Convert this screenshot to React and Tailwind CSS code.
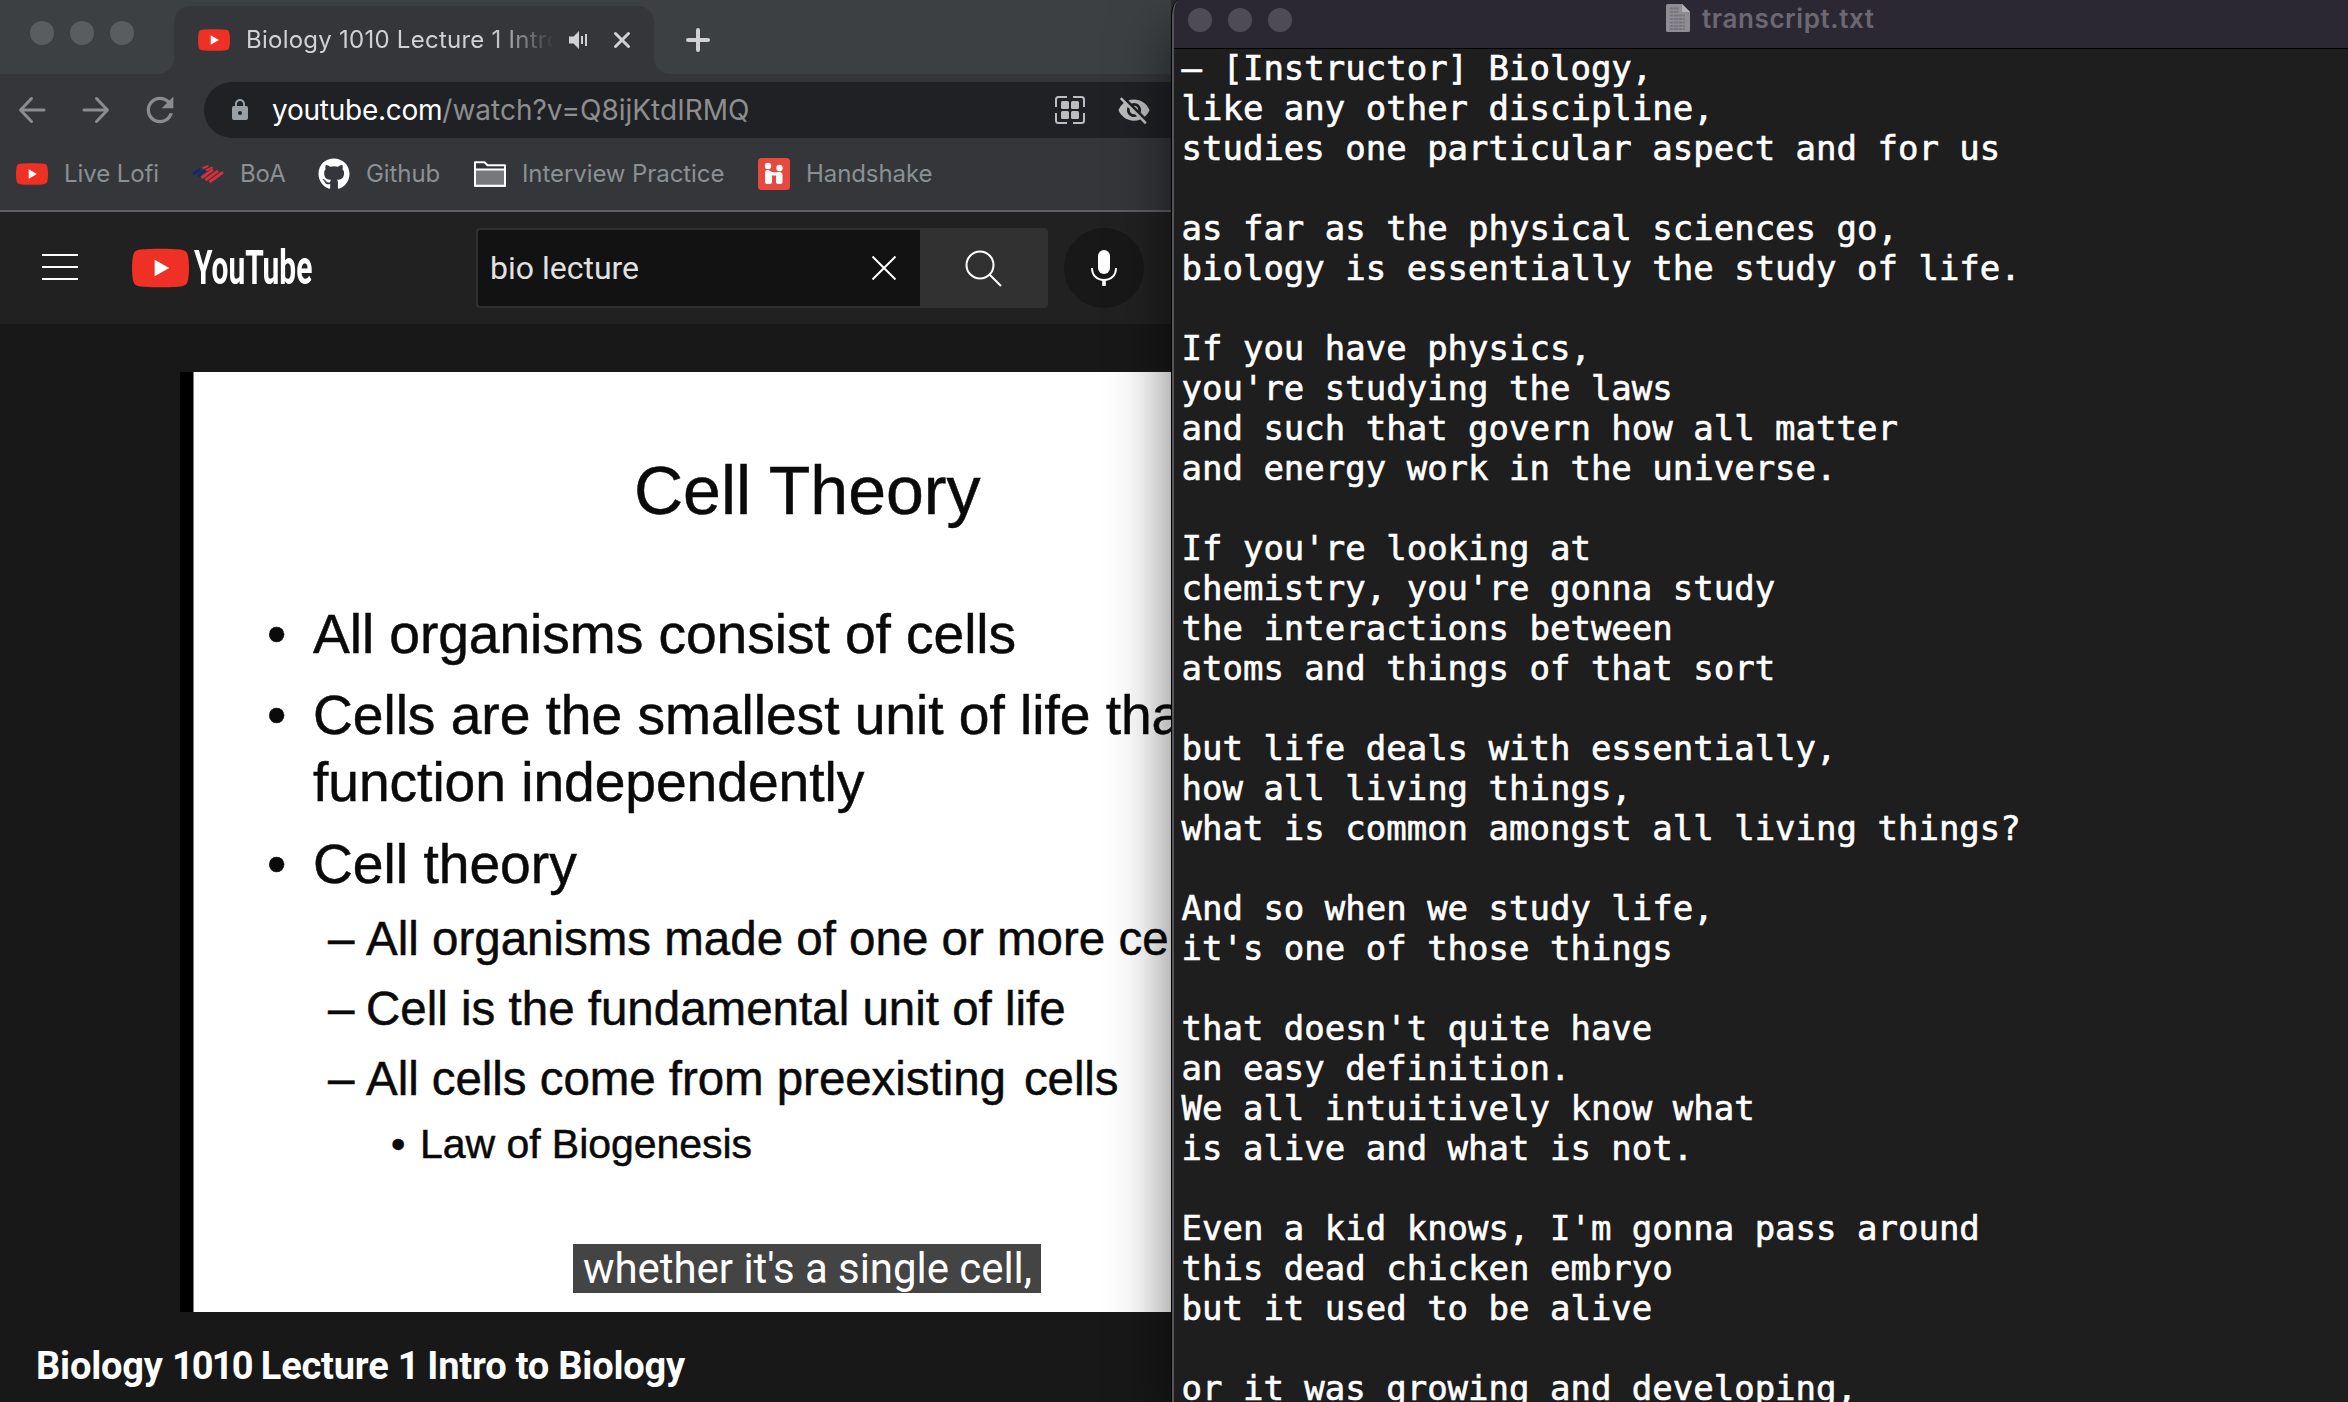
import React from "react";
import { FaGithub } from "react-icons/fa";
import { MdLock, MdVisibilityOff, MdRefresh } from "react-icons/md";

function YouTubeBadge({ className }) {
  return (
    <svg viewBox="0 0 32 22" className={className}>
      <path
        d="M4 .8C9 0 23 0 28 .8c2 .3 3 1.300 3.400 3.200.8 4 .8 10 0 14-.4 1.900-1.400 2.900-3.400 3.200-5 .8-19 .8-24 0-2-.3-3-1.300-3.400-3.200C-.2 14-.2 8 .6 4 1 2.100 2 1.100 4 .8Z"
        fill="#ee3124"
      />
      <path d="M12.700 6.300v9.400l8.200-4.700Z" fill="#fff" />
    </svg>
  );
}

function TrafficLights({ dot }) {
  return (
    <div className="flex gap-4">
      {[0, 1, 2].map((i) => (
        <span key={i} className={`size-6 rounded-full ${dot}`} />
      ))}
    </div>
  );
}

function BoaIcon() {
  return (
    <svg viewBox="0 0 32 18" className="h-[18px] w-8 shrink-0" fill="none">
      <path d="M1 9 8.500 4.500M6 11.300 12.500 5.500" stroke="#14296b" strokeWidth="2.800" />
      <path d="M10.500 3.300 16.500 .9M14 5.300 20.500 2.300" stroke="#d5303e" strokeWidth="2" />
      <path d="M9.500 12.700 21 4.600M13.500 15 26 5.800M17.500 17 31 7.300" stroke="#d5303e" strokeWidth="2.900" />
    </svg>
  );
}

function FolderIcon() {
  return (
    <svg viewBox="0 0 32 26" className="h-[26px] w-8 shrink-0">
      <path d="M1 24.800V1.200h9.500l3 3H31v20.600Z" fill="#35363a" stroke="#fff" strokeWidth="2" strokeLinejoin="round" />
      <path d="M1 8.500h30v16.300H1Z" fill="#77787b" stroke="#fff" strokeWidth="2" strokeLinejoin="round" />
    </svg>
  );
}

function HandshakeIcon() {
  return (
    <svg viewBox="0 0 32 32" className="size-8 shrink-0">
      <rect width="32" height="32" rx="3.500" fill="#e64a3f" />
      <circle cx="10" cy="8" r="3.200" fill="#fff" />
      <circle cx="21.500" cy="10" r="3.200" fill="#fff" />
      <path
        d="M7 14.500c0-2 1.500-2.800 3-2.500 1.500.3 3 2 5.500 2.300 2 .3 3-.2 5.500-.2 2.500 0 3.500 1.200 3.500 3V24c0 1.300-.8 2-2 2h-2.500c-1.200 0-2-.7-2-2v-6.500h-4V24c0 1.300-.8 2-2 2H9c-1.200 0-2-.7-2-2Z"
        fill="#fff"
      />
    </svg>
  );
}

function TabStrip() {
  return (
    <div className="flex h-[74px] shrink-0">
      <div className="w-[174px] shrink-0 rounded-br-2xl bg-[#3c4043] pt-[21px] pl-[30px]">
        <TrafficLights dot="bg-[#5a5d60]" />
      </div>
      <div className="w-[480px] shrink-0 bg-[#3c4043] pt-1.5">
        <div className="flex h-[68px] items-start rounded-t-2xl bg-[#35363a] pt-[13px] pl-6 text-[#d0d1d3]">
          <YouTubeBadge className="mt-2.5 h-[22px] w-8 shrink-0" />
          <div className="ml-4 h-10 w-[308px] shrink-0 overflow-hidden mask-r-from-80% mask-r-to-100% text-2xl leading-[41px] tracking-[0.25px] whitespace-nowrap">
            Biology 1010 Lecture 1 Intro to Biology
          </div>
          <svg viewBox="0 0 18 18" className="mt-3 ml-[15px] size-[18px] shrink-0" fill="currentColor">
            <path d="M0 5.500h4.500L10 0v18l-5.500-5.500H0Z M12 5h2v8h-2Z M16 3h2v12h-2Z" />
          </svg>
          <svg viewBox="0 0 18 18" className="mt-3 ml-[26px] size-[18px] shrink-0" stroke="currentColor" strokeWidth="3" strokeLinecap="round">
            <path d="M2.500 2.500l13 13M15.500 2.500l-13 13" />
          </svg>
        </div>
      </div>
      <div className="flex-1 rounded-bl-2xl bg-[#3c4043] pt-7 pl-8">
        <svg viewBox="0 0 24 24" className="size-6" stroke="#d0d1d3" strokeWidth="4" strokeLinecap="round">
          <path d="M12 2v20M2 12h20" />
        </svg>
      </div>
    </div>
  );
}

function Toolbar() {
  return (
    <div className="flex h-[72px] shrink-0 items-center pl-[18px] text-[#8b8c8e]">
      <svg viewBox="0 0 28 28" className="size-7 shrink-0" fill="none" stroke="currentColor" strokeWidth="3" strokeLinecap="round" strokeLinejoin="round">
        <path d="M26 14H3M13.500 2.500 2.500 14l11 11.500" />
      </svg>
      <svg viewBox="0 0 28 28" className="ml-9 size-7 shrink-0" fill="none" stroke="currentColor" strokeWidth="3" strokeLinecap="round" strokeLinejoin="round">
        <path d="M2 14h23M14.500 2.500l11 11.500-11 11.500" />
      </svg>
      <MdRefresh className="ml-[30px] size-10 shrink-0" />
      <div className="ml-6 flex h-14 flex-1 items-center rounded-l-full bg-[#202124] pl-6">
        <MdLock className="size-6 shrink-0 text-[#9aa0a6]" />
        <div className="ml-5 flex-1 text-[28px] leading-10 whitespace-nowrap text-[#8e8e8f]">
          <span className="tracking-[-0.25px] text-white">youtube.com</span>
          <span className="tracking-[0px]">/watch?v=Q8ijKtdIRMQ</span>
        </div>
        <svg viewBox="0 0 30 30" className="size-[30px] shrink-0 text-[#bdbdbe]">
          <g fill="none" stroke="currentColor" strokeWidth="2">
            <path d="M1 12V4.500Q1 2 3.500 2H12M18 2h8.500Q29 2 29 4.500V12M29 18v7.500q0 2.500-2.500 2.500H18M12 28H3.500Q1 28 1 25.500V18" />
          </g>
          <g fill="currentColor">
            <rect x="6" y="6" width="8" height="8" rx="1.500" />
            <rect x="16" y="6" width="8" height="8" rx="1.500" />
            <rect x="6" y="16" width="8" height="8" rx="1.500" />
            <rect x="16" y="16" width="8" height="8" rx="1.500" />
          </g>
        </svg>
        <MdVisibilityOff className="mr-[20px] ml-8 size-[34px] shrink-0 text-[#bdbdbe]" />
      </div>
    </div>
  );
}

function Bookmark({ icon, label, className }) {
  return (
    <div className={`flex shrink-0 items-center ${className}`}>
      {icon}
      <span className="ml-4 text-2xl tracking-[-0.08px] whitespace-nowrap text-[#8a9093]">{label}</span>
    </div>
  );
}

function BookmarksBar() {
  return (
    <div className="flex h-[66px] shrink-0 items-center border-b-2 border-[#5f6065] pb-[8px] pl-4">
      <Bookmark className="w-[176px]" label="Live Lofi" icon={<YouTubeBadge className="h-[22px] w-8 shrink-0" />} />
      <Bookmark className="w-[126px]" label="BoA" icon={<BoaIcon />} />
      <Bookmark className="w-[156px]" label="Github" icon={<FaGithub className="size-8 shrink-0 text-white" />} />
      <Bookmark className="w-[284px]" label="Interview Practice" icon={<FolderIcon />} />
      <Bookmark className="w-[190px]" label="Handshake" icon={<HandshakeIcon />} />
    </div>
  );
}

function YouTubeHeader() {
  return (
    <header className="flex h-28 shrink-0 items-center bg-[#212121] pl-[42px] font-[Roboto,sans-serif]">
      <div className="-mt-0.5 flex w-9 shrink-0 flex-col gap-2.5">
        <span className="h-0.5 bg-white" />
        <span className="h-0.5 bg-white" />
        <span className="h-0.5 bg-white" />
      </div>
      <YouTubeBadge className="ml-[54px] h-10 w-[57px] shrink-0" />
      <div className="w-[170px] shrink-0">
        <span className="ml-[5px] inline-block origin-left scale-x-[0.61] text-[49px] leading-[56px] font-bold text-white">YouTube</span>
      </div>
      <div className="ml-[117px] flex h-20 w-[444px] shrink-0 items-center rounded-l-sm border-2 border-r-0 border-[#303030] bg-[#121212] pl-3">
        <span className="flex-1 text-[32px] leading-10 text-[#e1e1e1]">bio lecture</span>
        <svg viewBox="0 0 24 24" className="mr-6 size-6" stroke="#fff" strokeWidth="2">
          <path d="M.5.5l23 23M23.500.5l-23 23" />
        </svg>
      </div>
      <div className="flex h-20 w-32 shrink-0 items-center rounded-r-sm bg-[#313131] pl-[45px]">
        <svg viewBox="0 0 37 37" className="size-[37px]" fill="none" stroke="#fff" strokeWidth="2">
          <circle cx="15" cy="15" r="13.500" />
          <path d="M24.500 24.500 36 36" />
        </svg>
      </div>
      <div className="ml-4 flex size-20 shrink-0 items-center justify-center rounded-full bg-[#181818]">
        <svg viewBox="0 0 26 36" className="h-9 w-[26px]">
          <rect x="7" y="0" width="12" height="24" rx="6" fill="#fff" />
          <path d="M1 18c0 7.500 5 12 12 12s12-4.500 12-12" fill="none" stroke="#fff" strokeWidth="2" />
          <path d="M11.200 30h3.600v6h-3.600Z" fill="#fff" />
        </svg>
      </div>
    </header>
  );
}

function Slide() {
  return (
    <div className="relative ml-[180px] h-[940px] shrink-0 overflow-hidden border-l-[13px] border-black bg-white font-['Liberation_Sans',Arial,sans-serif] whitespace-nowrap text-[#0a0a0a] [-webkit-text-stroke:0.5px_#0a0a0a]">
      <div className="h-full border-l border-[#808080]">
        <h1 className="pt-[78px] pl-[440px] text-[68px] leading-[80px] font-normal">Cell Theory</h1>
        <ul className="mt-[71px] pl-[73px] text-[55.2px] leading-[67px]">
          <li className="flex">
            <span className="w-[46px] shrink-0">•</span>
            <span className="tracking-[-0.08px]">All organisms consist of cells</span>
          </li>
          <li className="mt-[14px] flex">
            <span className="w-[46px] shrink-0">•</span>
            <span className="tracking-[-0.05px]">
              Cells are the smallest unit of life that
              <br />
              function independently
            </span>
          </li>
          <li className="mt-[15px] flex">
            <span className="w-[46px] shrink-0">•</span>Cell theory
          </li>
        </ul>
        <ul className="mt-[6px] pl-[134px] text-[47.5px] leading-[70px]">
          <li className="flex">
            <span className="w-[38px] shrink-0">–</span>All organisms made of one or more cells
          </li>
          <li className="flex">
            <span className="w-[38px] shrink-0">–</span>Cell is the fundamental unit of life
          </li>
          <li className="flex">
            <span className="w-[38px] shrink-0">–</span>
            <span className="tracking-[-0.05px]">All cells come from preexisting</span>
            <span className="ml-[18px] tracking-[-0.1px]">cells</span>
          </li>
        </ul>
        <p className="flex pl-[197px] text-[41px] leading-[60px]">
          <span className="w-[29px] shrink-0">•</span>
          <span className="tracking-[-0.05px]">Law of Biogenesis</span>
        </p>
      </div>
      <div className="absolute bottom-[19px] left-[380px] h-[49px] w-[468px] bg-[#444] pl-px text-center font-[Roboto,sans-serif] text-[42px] leading-[49px] tracking-[-0.05px] text-white [-webkit-text-stroke:0px]">
        whether it's a single cell,
      </div>
    </div>
  );
}

function Browser() {
  return (
    <section className="flex h-full w-[1171px] shrink-0 flex-col overflow-hidden bg-[#35363a] font-[Inter,sans-serif]">
      <TabStrip />
      <Toolbar />
      <BookmarksBar />
      <YouTubeHeader />
      <main className="flex flex-1 flex-col bg-[#181818] pt-12">
        <Slide />
        <h2 className="mt-[30px] ml-[36px] font-[Roboto,sans-serif] text-[38px] leading-[48px] font-bold tracking-[-0.2px] whitespace-nowrap text-white">
          Biology <span className="tracking-[-1.900px]">1010</span> Lecture <span className="tracking-[-1.500px]">1</span> Intro to Biology
        </h2>
      </main>
    </section>
  );
}

const transcript = `– [Instructor] Biology,
like any other discipline,
studies one particular aspect and for us

as far as the physical sciences go,
biology is essentially the study of life.

If you have physics,
you're studying the laws
and such that govern how all matter
and energy work in the universe.

If you're looking at
chemistry, you're gonna study
the interactions between
atoms and things of that sort

but life deals with essentially,
how all living things,
what is common amongst all living things?

And so when we study life,
it's one of those things

that doesn't quite have
an easy definition.
We all intuitively know what
is alive and what is not.

Even a kid knows, I'm gonna pass around
this dead chicken embryo
but it used to be alive

or it was growing and developing,`;

function DocumentIcon() {
  return (
    <svg viewBox="0 0 24 28" className="h-7 w-6 shrink-0">
      <path d="M1.500 0H16l8 8v18.500q0 1.500-1.500 1.500h-21Q0 28 0 26.500v-25Q0 0 1.500 0Z" fill="#8f8c94" />
      <path d="M16 0v6.500Q16 8 17.500 8H24Z" fill="#b4b2b8" />
      <path d="M4 4.500h9M4 8h9M4 11.500h15M4 15h15M4 18.500h15M4 22h15M4 25h15" stroke="#77747d" strokeWidth="1.800" strokeDasharray="3 .6 5 .5" />
    </svg>
  );
}

function TranscriptWindow() {
  return (
    <section className="relative z-10 flex h-full min-w-0 flex-1 flex-col overflow-hidden rounded-tl-[8px_16px] border-l border-black bg-[#1e1e1e] shadow-[0_30px_60px_rgba(0,0,0,0.55)]">
      <div className="flex min-h-0 flex-1 flex-col overflow-hidden rounded-tl-[8px_16px] border-l-2 border-[#555458]">
        <div className="flex h-12 shrink-0 bg-[#2c2833] pt-2 pl-[14px]">
          <TrafficLights dot="bg-[#4f4b56]" />
          <div className="ml-[374px] flex h-6 items-center font-[Inter,sans-serif] text-[26px] font-semibold tracking-[0.6px] text-[#6c6873]">
            <span className="-mt-[4px] flex">
              <DocumentIcon />
            </span>
            <span className="-mt-[3px] ml-[12px]">transcript.txt</span>
          </div>
        </div>
        <div className="min-h-0 flex-1 overflow-hidden border-t border-black">
          <pre className="-mt-px pl-[7.500px] font-['DejaVu_Sans_Mono',monospace] text-[34px] leading-[40px] text-white [-webkit-text-stroke:0.6px_white]">
            {transcript}
          </pre>
        </div>
      </div>
    </section>
  );
}

export default function App() {
  return (
    <div className="flex h-[1402px] w-[2348px] overflow-hidden bg-[#2b2d30]">
      <Browser />
      <TranscriptWindow />
    </div>
  );
}
